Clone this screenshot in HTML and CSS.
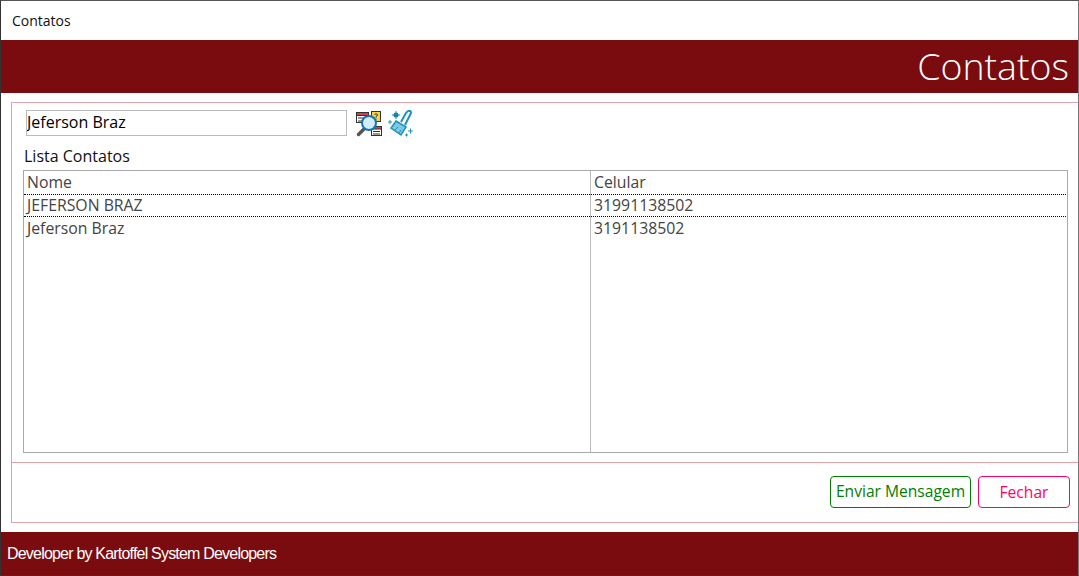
FILE: index.html
```html
<!DOCTYPE html>
<html lang="pt-BR">
<head>
    <meta charset="UTF-8">
    <title>Contatos</title>
    <link rel="stylesheet" href="styles.css">
</head>
<body>
    <div class="window">
        <div class="title-bar">Contatos</div>
        <div class="header">Contatos</div>

        <div class="panel">
            <div class="panel-top">
                <div class="search-row">
                    <input class="search-input" type="text" value="Jeferson Braz">
                    <!-- Pesquisar -->
                    <svg class="icon" width="27" height="27" viewBox="0 0 27 27">
                        <rect x="1.500" y="2.500" width="12" height="10" fill="#fff" stroke="#333"/>
                        <rect x="1.500" y="2.500" width="12" height="3" fill="#d9404a" stroke="#333"/>
                        <path d="M3 8h8M3 11h5" stroke="#333"/>
                        <rect x="16.500" y="1.500" width="9" height="10" fill="#f6d44a" stroke="#333"/>
                        <path d="M19.500 4.500q1.500-1.500 3 0q0 1.500-1.500 2v1M21 8.500v1" fill="none" stroke="#333"/>
                        <rect x="16.500" y="16.500" width="10" height="9" fill="#fff" stroke="#333"/>
                        <rect x="16.500" y="16.500" width="10" height="2.500" fill="#d9404a" stroke="#333"/>
                        <path d="M18 21.500h7M18 24h7" stroke="#333"/>
                        <path d="M9 19L3.500 24.500" stroke="#555" stroke-width="3.500" stroke-linecap="round"/>
                        <circle cx="14" cy="13" r="7" fill="#d5ecf8" stroke="#1274b8" stroke-width="2"/>
                    </svg>
                    <!-- Limpar -->
                    <svg class="icon" width="27" height="28" viewBox="0 0 27 28">
                        <path d="M14 13L19 4q2-3 4-2t0 4L18 16" fill="none" stroke="#1b93bd" stroke-width="2"/>
                        <path d="M9 12l10 6-5 8-10-7z" fill="#7cc9e3" stroke="#1b93bd" stroke-width="1.500"/>
                        <path d="M8 21l3-3M12 24l2-3" stroke="#1b93bd"/>
                        <circle cx="9" cy="6" r="2.500" fill="#1b6f96"/>
                        <path d="M9 2v8M5 6h8M1 13h4M3 11v4M21 22h5M23.500 19.500v5M18 26h3M19.500 24.500v3" stroke="#1b93bd"/>
                    </svg>
                </div>
                <div class="list-title">Lista Contatos</div>
                <div class="list">
                    <div class="list-col list-col-name">
                        <div class="list-cell">Nome</div>
                        <div class="list-cell list-selected">JEFERSON BRAZ</div>
                        <div class="list-cell">Jeferson Braz</div>
                    </div>
                    <div class="list-col list-col-phone">
                        <div class="list-cell">Celular</div>
                        <div class="list-cell list-selected">31991138502</div>
                        <div class="list-cell">3191138502</div>
                    </div>
                </div>
            </div>
            <div class="panel-bottom">
                <button class="button button-send">Enviar Mensagem</button>
                <button class="button button-close">Fechar</button>
            </div>
        </div>

        <div class="footer">Developer by Kartoffel System Developers</div>
    </div>
</body>
</html>
```

FILE: styles.css
```css
html, body {
    margin: 0;
    padding: 0;
    background: #fff;
}
.window {
    width: 1079px;
    height: 576px;
    box-sizing: border-box;
    border-top: 1px solid #555;
    border-left: 1px solid #333;
    border-right: 1px solid #777;
    border-bottom: 1px solid #333;
    display: flex;
    flex-direction: column;
    font-family: "Open Sans", sans-serif;
    background: #fff;
    overflow: hidden;
}
.title-bar {
    height: 39px;
    line-height: 39px;
    padding-left: 11px;
    font-size: 14px;
    color: #111;
}
.header {
    height: 53px;
    background: #7a0c10;
    color: #fff;
    font-size: 37.5px;
    font-weight: 300;
    line-height: 51px;
    text-align: right;
    padding-right: 9px;
}
.panel {
    margin: 9px 0 9px 10px;
    flex: 1;
    border: 1px solid #e2a3a6;
    border-right: none;
    display: flex;
    flex-direction: column;
}
.panel-top {
    height: 359px;
    border-bottom: 1px solid #e2a3a6;
    padding: 0 10px 0 11px;
}
.search-row {
    display: flex;
    align-items: center;
    margin: 5px 0 0 3px;
    height: 30px;
}
.search-input {
    width: 321px;
    height: 26px;
    box-sizing: border-box;
    border: 1px solid #bbb;
    padding: 0 1px 2px 0;
    font-family: "Open Sans", sans-serif;
    font-size: 16px;
    color: #000;
    margin-right: 8px;
}
.icon {
    margin-right: 5px;
}
.list-title {
    margin: 8px 0 0 1px;
    font-size: 16px;
    line-height: 20px;
    color: #111;
}
.list {
    height: 283px;
    box-sizing: border-box;
    border: 1px solid #aaa;
    margin-top: 4px;
    display: flex;
}
.list-col {
    flex: 1;
}
.list-col-name {
    flex: none;
    width: 566px;
    border-right: 1px solid #bbb;
}
.list-col-phone {
    padding-right: 1px;
}
.list-cell {
    height: 23px;
    line-height: 22px;
    padding-left: 3px;
    font-size: 15.8px;
    color: #444;
    box-sizing: border-box;
}
.list-selected {
    border-top: 1px dotted #000;
    border-bottom: 1px dotted #000;
    line-height: 20px;
}
.panel-bottom {
    flex: 1;
    display: flex;
    justify-content: flex-end;
    align-items: flex-start;
    gap: 7px;
    padding: 13px 8px 0 0;
}
.button {
    height: 32px;
    background: #fff;
    border-radius: 4px;
    font-family: "Open Sans", sans-serif;
    font-size: 15.6px;
    padding: 0 0 2px;
    cursor: pointer;
}
.button-send {
    width: 141px;
    border: 1px solid #008000;
    color: #008000;
}
.button-close {
    width: 92px;
    border: 1px solid #ff0066;
    color: #ff0066;
    padding-bottom: 0;
}
.footer {
    height: 43px;
    background: #7a0c10;
    color: #fff;
    font-family: "Liberation Sans", sans-serif;
    font-size: 16px;
    letter-spacing: -0.8px;
    line-height: 43px;
    padding-left: 6px;
}
```
